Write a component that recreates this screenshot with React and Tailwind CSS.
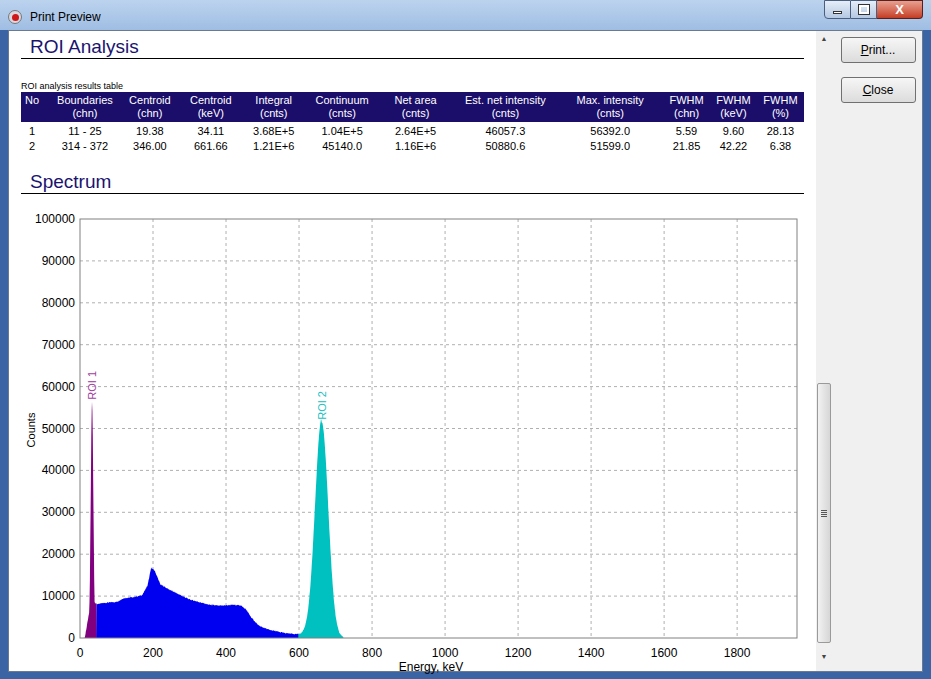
import React from "react";

const W = 1964;
const X = (e) => 71 + (e * 717) / W;
const Y = (c) => 442 - (c * 419) / 100000;

function noise(i) {
  const s = Math.sin(i * 12.9898) * 43758.5453;
  return s - Math.floor(s) - 0.5;
}

const knots = [
  [45, 8100], [80, 8500], [100, 8600], [120, 9500], [150, 9800], [170, 10200], [185, 12500],
  [195, 16800], [205, 16000], [220, 12800], [250, 11300], [300, 9200], [350, 8000],
  [380, 7700], [420, 7900], [440, 7800], [455, 6800], [470, 4800], [490, 2900],
  [520, 1900], [560, 1200], [600, 900],
];

function continuum(e) {
  if (e < 45 || e > 600) return 0;
  for (let k = 1; k < knots.length; k++) {
    const [e1, v1] = knots[k];
    const [e0, v0] = knots[k - 1];
    if (e <= e1) return v0 + ((e - e0) / (e1 - e0)) * (v1 - v0);
  }
  return 0;
}

function buildPath(fn, from, to, step, amp) {
  let d = `M${X(from).toFixed(1)},${Y(0)}`;
  let i = 0;
  for (let e = from; e <= to; e += step) {
    const b = fn(e);
    const v = Math.max(0, b + (b > 0 ? noise(i++) * amp : 0));
    d += ` L${X(e).toFixed(1)},${Y(v).toFixed(1)}`;
  }
  d += ` L${X(to).toFixed(1)},${Y(0)} Z`;
  return d;
}

const roi1 = (e) => {
  const g = 56392 * Math.exp(-((e - 33) ** 2) / (2 * 3.6 ** 2));
  const tail = e < 33 ? Math.max(0, 10000 - (33 - e) * 500) : 8300;
  return Math.max(g, e >= 12 ? tail : 0);
};
const roi2 = (e) => {
  const g = 51599 * Math.exp(-((e - 662) ** 2) / (2 * 18 ** 2));
  return g + (e < 662 ? 800 : 0);
};

const cols = [
  ["No", "", 30, "left"],
  ["Boundaries", "(chn)", 68],
  ["Centroid", "(chn)", 62],
  ["Centroid", "(keV)", 60],
  ["Integral", "(cnts)", 66],
  ["Continuum", "(cnts)", 71],
  ["Net area", "(cnts)", 76],
  ["Est. net intensity", "(cnts)", 104],
  ["Max. intensity", "(cnts)", 106],
  ["FWHM", "(chn)", 47],
  ["FWHM", "(keV)", 47],
  ["FWHM", "(%)", 47],
];

const rows = [
  ["1", "11 - 25", "19.38", "34.11", "3.68E+5", "1.04E+5", "2.64E+5", "46057.3", "56392.0", "5.59", "9.60", "28.13"],
  ["2", "314 - 372", "346.00", "661.66", "1.21E+6", "45140.0", "1.16E+6", "50880.6", "51599.0", "21.85", "42.22", "6.38"],
];

const narrow = { fontFamily: "Liberation Sans Narrow, Liberation Sans, sans-serif" };

function Chart() {
  const xt = [0, 200, 400, 600, 800, 1000, 1200, 1400, 1600, 1800];
  const yt = [0, 10000, 20000, 30000, 40000, 50000, 60000, 70000, 80000, 90000, 100000];
  return (
    <svg width="808" height="479" viewBox="0 0 808 479" style={{ fontFamily: "Liberation Sans, Arial, sans-serif" }}>
      {xt.slice(1).map((t) => (
        <line key={t} x1={X(t)} x2={X(t)} y1={23} y2={442} stroke="#b0b0b0" strokeDasharray="3 3" />
      ))}
      {yt.slice(1, -1).map((t) => (
        <line key={t} x1={71} x2={788} y1={Y(t)} y2={Y(t)} stroke="#b0b0b0" strokeDasharray="3 3" />
      ))}
      <path d={buildPath(continuum, 44, 600, 1, 250)} fill="#0000f0" />
      <path d={buildPath(roi1, 10, 45, 1, 300)} fill="#800080" />
      <path d={buildPath(roi2, 598, 722, 1, 300)} fill="#00c0c0" />
      <rect x={71} y={23} width={717} height={419} fill="none" stroke="#808080" />
      {xt.map((t) => (
        <text key={t} x={X(t)} y={461} fontSize="12" textAnchor="middle" fill="#000">{t}</text>
      ))}
      {yt.map((t) => (
        <text key={t} x={66} y={Y(t) + 4} fontSize="12" textAnchor="end" fill="#000">{t}</text>
      ))}
      <text x={422} y={475} fontSize="12" textAnchor="middle">Energy, keV</text>
      <text transform="translate(26,234) rotate(-90)" fontSize="11" textAnchor="middle">Counts</text>
      <text transform={`translate(${X(33) + 4},${Y(56392) - 2}) rotate(-90)`} fontSize="11" fill="#a040a0">ROI 1</text>
      <text transform={`translate(${X(662) + 4},${Y(51599) - 2}) rotate(-90)`} fontSize="11" fill="#20c0c0">ROI 2</text>
    </svg>
  );
}

export default function App() {
  return (
    <div className="w-[931px] h-[679px] bg-[#3a64a4] flex flex-col overflow-hidden" style={{ fontFamily: "Liberation Sans, Arial, sans-serif" }}>
      {/* title bar */}
      <div className="h-[30px] shrink-0 flex items-start bg-gradient-to-b from-[#bcd3ee] to-[#9fbde3] relative">
        <div className="flex items-center gap-2 pl-2 pt-[8px]">
          <div className="w-[14px] h-[14px] rounded-full bg-[#d8d8e0] border border-[#777] flex items-center justify-center">
            <div className="w-[7px] h-[7px] rounded-full bg-[#d01818]" />
          </div>
          <span className="text-[12px] text-black">Print Preview</span>
        </div>
        <div className="absolute right-[8px] top-0 flex">
          <div className="w-[27px] h-[19px] border border-[#4a5f80] rounded-bl-[4px] bg-gradient-to-b from-[#e6eef8] to-[#b4c8e2] flex items-end justify-center pb-[4px]">
            <div className="w-[9px] h-[3px] bg-white border border-[#333]" />
          </div>
          <div className="w-[26px] h-[19px] border border-l-0 border-[#4a5f80] bg-gradient-to-b from-[#e6eef8] to-[#b4c8e2] flex items-center justify-center">
            <div className="w-[10px] h-[9px] border-2 border-white outline outline-1 outline-[#333]" />
          </div>
          <div className="w-[46px] h-[19px] border border-l-0 border-[#5a2020] rounded-br-[4px] bg-gradient-to-b from-[#e8a090] to-[#c43a22] flex items-center justify-center text-white font-bold text-[13px]">
            X
          </div>
        </div>
      </div>
      {/* body */}
      <div className="flex flex-1 min-h-0 mx-[8px] mb-[7px] border border-[#6a7a90]">
        <div className="w-[807px] bg-white flex flex-col">
          <div className="px-[12px] pt-[6px]">
            <div className="pl-[9px] text-[19px] text-[#1a1470] leading-[20px]" style={narrow}>ROI Analysis</div>
            <div className="h-px bg-black mt-[1px]" />
            <div className="text-[9px] mt-[22px] leading-[10px]" style={narrow}>ROI analysis results table</div>
            <table className="border-collapse text-[11px] leading-[13px] mt-[1px]" style={narrow}>
              <thead>
                <tr className="bg-[#1b0e6a] text-white">
                  {cols.map(([a, b, w, al], i) => (
                    <th key={i} className={`font-normal py-[2px] ${al === "left" ? "text-left pl-[4px] align-top" : "text-center"}`} style={{ width: w }}>
                      {a}
                      <br />
                      {b}
                    </th>
                  ))}
                </tr>
              </thead>
              <tbody>
                {rows.map((r, i) => (
                  <tr key={i}>
                    {r.map((c, j) => (
                      <td key={j} className={`pt-[3px] leading-[12px] ${j === 0 ? "text-left pl-[8px]" : "text-center"}`}>{c}</td>
                    ))}
                  </tr>
                ))}
              </tbody>
            </table>
            <div className="pl-[9px] text-[19px] text-[#1a1470] leading-[20px] mt-[20px]" style={narrow}>Spectrum</div>
            <div className="h-px bg-black mt-[1px]" />
          </div>
          <div className="mt-[2px]">
            <Chart />
          </div>
        </div>
        {/* scrollbar */}
        <div className="w-[16px] bg-[#f0f0f0] flex flex-col items-center">
          <div className="h-[16px] text-[7px] text-[#444] leading-[16px]">▲</div>
          <div className="flex-1" />
          <div className="w-[14px] h-[260px] border border-[#9a9a9a] rounded-[2px] bg-gradient-to-r from-[#f2f2f2] to-[#d6d6d6] flex items-center justify-center">
            <div className="flex flex-col gap-[1px]">
              <div className="w-[6px] h-px bg-[#555]" />
              <div className="w-[6px] h-px bg-[#555]" />
              <div className="w-[6px] h-px bg-[#555]" />
              <div className="w-[6px] h-px bg-[#555]" />
            </div>
          </div>
          <div className="h-[28px] text-[7px] text-[#444] leading-[28px]">▼</div>
        </div>
        {/* right panel */}
        <div className="flex-1 bg-[#f0f0f0] flex flex-col items-center pt-[6px] gap-[14px] pl-[2px]">
          <button className="w-[75px] h-[26px] border border-[#707070] rounded-[3px] bg-gradient-to-b from-[#f6f6f6] to-[#dcdcdc] text-[12px]" style={narrow}><u>P</u>rint...</button>
          <button className="w-[75px] h-[26px] border border-[#707070] rounded-[3px] bg-gradient-to-b from-[#f6f6f6] to-[#dcdcdc] text-[12px]" style={narrow}><u>C</u>lose</button>
        </div>
      </div>
    </div>
  );
}
